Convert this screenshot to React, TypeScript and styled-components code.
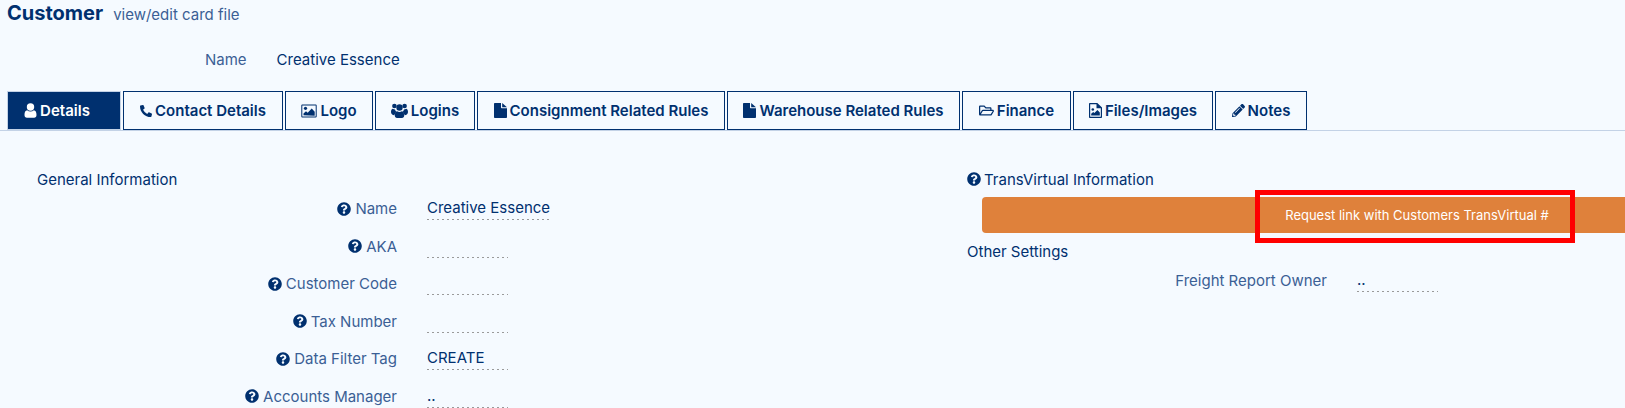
import React from "react";
import styled, { createGlobalStyle } from "styled-components";
import { FaPhoneAlt, FaRegFolderOpen, FaPencilAlt, FaQuestionCircle } from "react-icons/fa";

const navy = "#00306f";
const muted = "#3b5f95";

const Global = createGlobalStyle`
  html, body {
    margin: 0;
    background: #f5faff;
    overflow: hidden;
  }
  body {
    font-family: Inter, "Liberation Sans", sans-serif;
    font-size: 15px;
    color: ${navy};
  }
`;

const Page = styled.div`
  width: 1625px;
  height: 408px;
  overflow: hidden;
`;

const Header = styled.header`
  display: flex;
  align-items: baseline;
  gap: 10px;
  height: 30px;
  padding-left: 7px;
`;

const Title = styled.h1`
  margin: 0;
  font-size: 20px;
  line-height: 26px;
  font-weight: 700;
`;

const Subtitle = styled.span`
  font-size: 15px;
  color: ${muted};
`;

const Summary = styled.div`
  display: flex;
  gap: 30px;
  height: 61px;
  padding: 20px 0 0 205px;
  box-sizing: border-box;
  line-height: 19px;
`;

const SummaryLabel = styled.span`
  color: ${muted};
`;

const Tabs = styled.nav`
  display: flex;
  gap: 2px;
  height: 39px;
  padding-left: 7px;
  border-bottom: 1px solid #c3d2e6;
`;

const Tab = styled.div<{ $active?: boolean; $width: number }>`
  display: flex;
  align-items: center;
  justify-content: center;
  gap: 3px;
  box-sizing: border-box;
  width: ${(p) => p.$width}px;
  height: 39px;
  padding-right: ${(p) => (p.$active ? 14 : 0)}px;
  border: 1px solid ${(p) => (p.$active ? "#c3d2e6" : navy)};
  font-weight: 600;
  color: ${(p) => (p.$active ? "#fff" : navy)};
  background: ${(p) => (p.$active ? navy : "transparent")};
`;

const Columns = styled.div`
  display: grid;
  grid-template-columns: 967px 1fr;
  padding-top: 38px;
`;

const SectionTitle = styled.div<{ $indent?: number }>`
  display: flex;
  align-items: center;
  gap: 3px;
  height: 20px;
  padding-left: ${(p) => p.$indent ?? 0}px;
`;

const Rows = styled.div`
  display: flex;
  flex-direction: column;
  gap: 17.6px;
  margin-top: 8px;
`;

const Row = styled.div<{ $labelWidth: number }>`
  display: grid;
  grid-template-columns: ${(p) => p.$labelWidth}px auto;
  justify-content: start;
  column-gap: 30px;
  height: 20px;
`;

const Label = styled.div`
  display: flex;
  align-items: center;
  justify-content: flex-end;
  gap: 4px;
  color: ${muted};
`;

const Value = styled.div`
  min-width: 81px;
  height: 23px;
  line-height: 21px;
  background: repeating-linear-gradient(to right, #9a9a9a 0 2px, transparent 2px 5px) left bottom / 100% 1px no-repeat;
`;

const HelpIcon = styled(FaQuestionCircle)`
  width: 14px;
  height: 14px;
  color: ${navy};
`;

const RequestBar = styled.div`
  position: relative;
  display: flex;
  align-items: center;
  height: 36px;
  margin: 8px 0 8px 15px;
  padding-left: 275px;
  background: #df813b;
  border-radius: 4px 0 0 4px;
`;

const RequestText = styled.span`
  width: 320px;
  text-align: center;
  font-size: 13px;
  color: #fff;
`;

const Highlight = styled.div`
  position: absolute;
  left: 273px;
  top: -7px;
  width: 320px;
  height: 53px;
  box-sizing: border-box;
  border: 5px solid #ff0000;
`;

const UserIcon = () => (
  <svg width="13" height="15" viewBox="0 0 13 15" fill="currentColor">
    <circle cx="6.5" cy="4" r="3.7" />
    <path d="M0.5 12c0-3 1-4.6 2.6-4.8 1 .8 2.1 1.2 3.4 1.2s2.4-.4 3.4-1.2c1.6.2 2.6 1.8 2.6 4.8 0 1.7-1 2.7-2.4 2.7H2.900C1.500 14.700.5 13.700.5 12z" />
  </svg>
);

const PictureIcon = () => (
  <svg width="16" height="14" viewBox="0 0 16 14" fill="currentColor">
    <path fillRule="evenodd" d="M1.200.5h13.600c.5 0 .9.4.9.9v11.200c0 .5-.4.9-.9.9H1.200c-.5 0-.9-.4-.9-.9V1.400c0-.5.4-.9.9-.9zm.1 1v11h13.400v-11z" />
    <circle cx="4.500" cy="4.300" r="1.600" />
    <path d="M2.500 11.300V9.500l2.500-2.300 1.700 1.600 4-4.300 3 3.200v4.100z" />
  </svg>
);

const UsersIcon = () => (
  <svg width="17" height="15" viewBox="0 0 17 15" fill="currentColor">
    <circle cx="3.400" cy="3" r="2.300" />
    <circle cx="13.600" cy="3" r="2.300" />
    <circle cx="8.500" cy="4.500" r="3.200" />
    <path d="M0 9c0-2 .7-3.300 1.900-3.300.7.500 1.400.8 2.100.8.300 1 .9 1.900 1.700 2.400C4.500 9.600 3.700 10.800 3.400 12.200 1.300 12.200 0 11 0 9z" />
    <path d="M17 9c0-2-.7-3.300-1.900-3.300-.7.500-1.400.8-2.100.8-.3 1-.9 1.900-1.700 2.400 1.200.7 2 1.900 2.300 3.300 2.100 0 3.400-1.200 3.400-3.200z" />
    <path d="M3.800 12.500c0-2.500 1-4 2.300-4.200.7.500 1.500.8 2.400.8s1.700-.3 2.400-.8c1.300.2 2.300 1.700 2.300 4.200 0 1.500-.9 2.500-2.200 2.500H6c-1.300 0-2.200-1-2.200-2.500z" />
  </svg>
);

const FileIcon = () => (
  <svg width="13" height="15" viewBox="0 0 13 15" fill="currentColor">
    <path d="M0 .8C0 .4.300 0 .8 0H7v4.200c0 .6.400 1 1 1h5v9c0 .4-.4.8-.8.8H.8c-.5 0-.8-.4-.8-.8z" />
    <path d="M8.200 0L13 4.200H8.200z" />
  </svg>
);

const FileImageIcon = () => (
  <svg width="13" height="15" viewBox="0 0 13 15" fill="currentColor">
    <path fillRule="evenodd" d="M.8 0h7.500L13 4.500v9.700c0 .4-.4.8-.8.8H.8c-.5 0-.8-.4-.8-.8V.8C0 .4.300 0 .8 0zM1.200 1.200v12.600h10.600V5.300H7.500V1.200z" />
    <circle cx="3.800" cy="6.500" r="1.300" />
    <path d="M2.200 12.500v-1.700l2-1.900 1.200 1.200 3-3.200 2.400 2.600v3z" />
  </svg>
);

const tabs = [
  { label: "Details", width: 114, icon: <UserIcon />, active: true },
  { label: "Contact Details", width: 160, icon: <FaPhoneAlt size={12} /> },
  { label: "Logo", width: 88, icon: <PictureIcon /> },
  { label: "Logins", width: 100, icon: <UsersIcon /> },
  { label: "Consignment Related Rules", width: 248, icon: <FileIcon /> },
  { label: "Warehouse Related Rules", width: 233, icon: <FileIcon /> },
  { label: "Finance", width: 109, icon: <FaRegFolderOpen size={15} /> },
  { label: "Files/Images", width: 140, icon: <FileImageIcon /> },
  { label: "Notes", width: 92, icon: <FaPencilAlt size={13} /> },
];

const fields = [
  { label: "Name", value: "Creative Essence" },
  { label: "AKA", value: "" },
  { label: "Customer Code", value: "" },
  { label: "Tax Number", value: "" },
  { label: "Data Filter Tag", value: "CREATE" },
  { label: "Accounts Manager", value: ".." },
];

export default function App() {
  return (
    <Page>
      <Global />
      <Header>
        <Title>Customer</Title>
        <Subtitle>view/edit card file</Subtitle>
      </Header>
      <Summary>
        <SummaryLabel>Name</SummaryLabel>
        <span>Creative Essence</span>
      </Summary>
      <Tabs>
        {tabs.map((t) => (
          <Tab key={t.label} $active={t.active} $width={t.width}>
            {t.icon}
            {t.label}
          </Tab>
        ))}
      </Tabs>
      <Columns>
        <section>
          <SectionTitle $indent={37}>General Information</SectionTitle>
          <Rows>
            {fields.map((f) => (
              <Row key={f.label} $labelWidth={397}>
                <Label>
                  <HelpIcon />
                  {f.label}
                </Label>
                <Value>{f.value}</Value>
              </Row>
            ))}
          </Rows>
        </section>
        <section>
          <SectionTitle>
            <HelpIcon />
            TransVirtual Information
          </SectionTitle>
          <RequestBar>
            <RequestText>Request link with Customers TransVirtual #</RequestText>
            <Highlight />
          </RequestBar>
          <SectionTitle>Other Settings</SectionTitle>
          <Rows>
            <Row $labelWidth={360}>
              <Label>Freight Report Owner</Label>
              <Value>..</Value>
            </Row>
          </Rows>
        </section>
      </Columns>
    </Page>
  );
}
